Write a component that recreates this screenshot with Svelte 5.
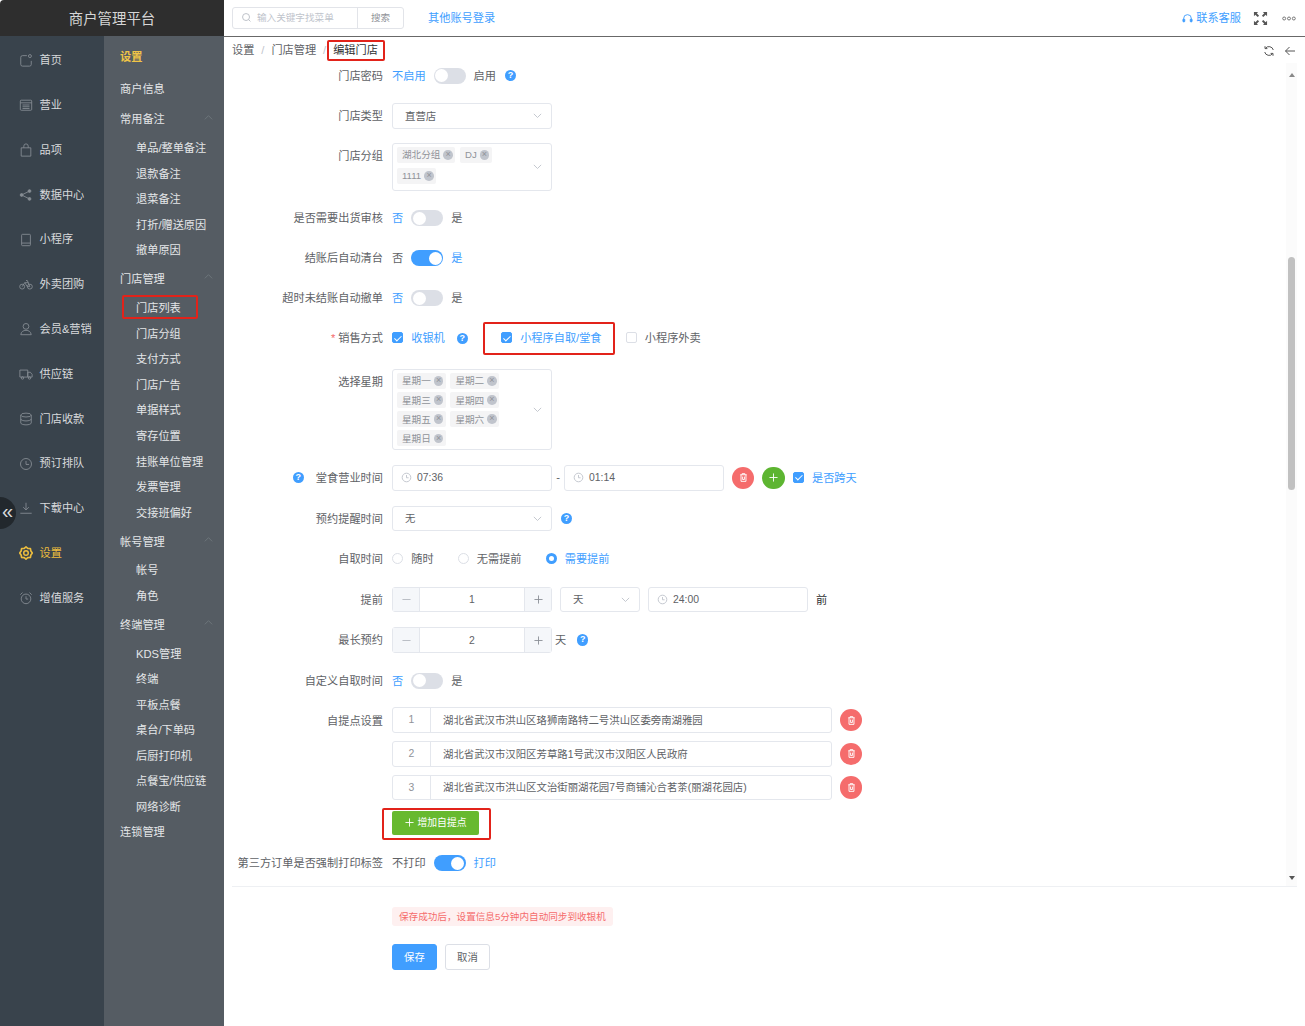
<script>
  const rail = [
    { label: '首页', icon: '<path d="M9 3H4a2 2 0 0 0-2 2v8a2 2 0 0 0 2 2h8a2 2 0 0 0 2-2V9"/><circle cx="12.5" cy="3.5" r="1.7"/>' },
    { label: '营业', icon: '<rect x="1.5" y="2.5" width="13" height="11.5" rx="1"/><path d="M1.5 5.5h13M4 8h8M4 10h8M4 12h8"/>' },
    { label: '品项', icon: '<path d="M2.5 5.5h11V15h-11zM5.5 5.5V3.5a2.5 2.5 0 0 1 5 0v2"/>' },
    { label: '数据中心', icon: '<circle cx="3" cy="8" r="1.6" fill="currentColor"/><circle cx="12" cy="3.5" r="1.6" fill="currentColor"/><circle cx="12" cy="12.5" r="1.6" fill="currentColor"/><path d="M3 8l9-4.500M3 8l9 4.500"/>' },
    { label: '小程序', icon: '<rect x="3" y="1.500" width="10" height="13" rx="1"/><path d="M3 11.500h10"/>' },
    { label: '外卖团购', icon: '<circle cx="3.600" cy="11" r="2.800"/><circle cx="12.400" cy="11" r="2.800"/><path d="M3.600 11L6.500 6.500l3 4.500h2.900L9.500 4H8M6.500 6.500h4"/>' },
    { label: '会员&营销', icon: '<circle cx="8" cy="5" r="3.300"/><path d="M2 14.500c.5-3.500 3-5 6-5s5.500 1.500 6 5z"/>' },
    { label: '供应链', icon: '<path d="M1 3.500h9v8H1zM10 6h3l2 2.500v3h-5z"/><circle cx="4" cy="12.500" r="1.400"/><circle cx="12" cy="12.500" r="1.400"/>' },
    { label: '门店收款', icon: '<ellipse cx="8" cy="3.500" rx="6" ry="2.200"/><path d="M2 3.500v9c0 1.200 2.700 2.200 6 2.200s6-1 6-2.200v-9M2 8c0 1.200 2.700 2.200 6 2.200s6-1 6-2.200"/>' },
    { label: '预订排队', icon: '<circle cx="8" cy="8" r="6.300"/><path d="M8 4.500V8.500h3.500"/>' },
    { label: '下载中心', icon: '<path d="M8 2v8M4.800 7L8 10.200 11.200 7M1.500 14h13"/>' },
    { label: '设置', active: true, icon: '<path stroke-width="1.900" stroke-linejoin="round" d="M8 1l2 1.700 3 .2.600 2.900L15.200 8l-1.600 2.200-.6 2.900-3 .2L8 15l-2-1.700-3-.2-.6-2.900L.8 8l1.600-2.200.6-2.900 3-.2z"/><circle stroke-width="1.700" cx="8" cy="8" r="2.600"/>' },
    { label: '增值服务', icon: '<circle cx="8" cy="9" r="5.500"/><path d="M8 6v3.200h2.500M1.500 4.200L4 1.800M14.500 4.200L12 1.800"/>' }
  ];

  const menu = [
    { title: '常用备注', items: ['单品/整单备注', '退款备注', '退菜备注', '打折/赠送原因', '撤单原因'] },
    { title: '门店管理', items: ['门店列表', '门店分组', '支付方式', '门店广告', '单据样式', '寄存位置', '挂账单位管理', '发票管理', '交接班偏好'] },
    { title: '帐号管理', items: ['帐号', '角色'] },
    { title: '终端管理', items: ['KDS管理', '终端', '平板点餐', '桌台/下单码', '后厨打印机', '点餐宝/供应链', '网络诊断'] }
  ];

  const groups = ['湖北分组', 'DJ', '1111'];
  const days = ['星期一', '星期二', '星期三', '星期四', '星期五', '星期六', '星期日'];
  const addresses = [
    '湖北省武汉市洪山区珞狮南路特二号洪山区委旁南湖雅园',
    '湖北省武汉市汉阳区芳草路1号武汉市汉阳区人民政府',
    '湖北省武汉市洪山区文治街丽湖花园7号商铺沁合茗茶(丽湖花园店)'
  ];
  const toggles = [
    { label: '是否需要出货审核', off: '否', on: '是', value: false },
    { label: '结账后自动清台', off: '否', on: '是', value: true },
    { label: '超时未结账自动撤单', off: '否', on: '是', value: false }
  ];
</script>

{#snippet chevron()}
  <svg class="chev" viewBox="0 0 12 12"><path d="M2 4.200l4 4 4-4" /></svg>
{/snippet}
{#snippet help()}
  <span class="help">?</span>
{/snippet}
{#snippet clock()}
  <svg class="clock" viewBox="0 0 12 12"><circle cx="6" cy="6" r="4.700" /><path d="M6 3.300V6.300h2.300" /></svg>
{/snippet}
{#snippet plus()}
  <svg class="plus" viewBox="0 0 10 10"><path d="M5 .5v9M.5 5h9" /></svg>
{/snippet}
{#snippet minus()}
  <svg class="plus" viewBox="0 0 10 10"><path d="M.5 5h9" /></svg>
{/snippet}
{#snippet trash()}
  <span class="round del">
    <svg viewBox="0 0 12 12"><path d="M2.500 3h7M4.500 3V1.800h3V3M3.300 3v7.200h5.400V3M5 5v3.200h2V5" /></svg>
  </span>
{/snippet}
{#snippet toggle(on)}
  <span class="switch" class:on><i></i></span>
{/snippet}
{#snippet tag(text)}
  <span class="tag">{text}<i>×</i></span>
{/snippet}

<div class="app">
  <aside class="side">
    <div class="brand">商户管理平台</div>
    <div class="side-body">
      <nav class="rail">
        {#each rail as r}
          <div class="rail-item" class:active={r.active}>
            <svg viewBox="0 0 16 16">{@html r.icon}</svg>
            <span>{r.label}</span>
          </div>
        {/each}
        <div class="collapse">«</div>
      </nav>
      <nav class="sub">
        <div class="sub-title">设置</div>
        <div class="sub-link">商户信息</div>
        {#each menu as g}
          <div class="sub-head">
            <span>{g.title}</span>
            <svg viewBox="0 0 12 12"><path d="M2 8l4-4 4 4" /></svg>
          </div>
          {#each g.items as item}
            <div class="sub-item">{item}</div>
          {/each}
        {/each}
        <div class="sub-last">连锁管理</div>
      </nav>
    </div>
  </aside>

  <main class="main">
    <header class="top">
      <div class="search">
        <div class="search-input">
          <svg viewBox="0 0 12 12"><circle cx="5.500" cy="5.500" r="3.800" /><path d="M8.300 8.300l2 2" /></svg>
          <span>输入关键字找菜单</span>
        </div>
        <div class="search-btn">搜索</div>
      </div>
      <a class="other">其他账号登录</a>
      <div class="top-right">
        <svg class="headset" viewBox="0 0 12 12"><path d="M1.800 8V6a4.200 4.200 0 0 1 8.400 0v2" /><rect x="1" y="6.500" width="2" height="3.200" rx=".8" fill="currentColor" /><rect x="9" y="6.500" width="2" height="3.200" rx=".8" fill="currentColor" /></svg>
        <a>联系客服</a>
        <svg class="full" viewBox="0 0 16 16"><path d="M1 1h4.500L4 2.500l2.500 2.500-1.500 1.500L2.500 4 1 5.500zM15 1v4.500L13.500 4 11 6.500 9.500 5 12 2.500 10.500 1zM1 15v-4.500L2.500 12 5 9.500 6.500 11 4 13.500 5.500 15zM15 15h-4.500l1.500-1.500L9.500 11 11 9.500l2.500 2.500 1.500-1.500z" /></svg>
        <svg class="dots" viewBox="0 0 16 5"><circle cx="2.500" cy="2.500" r="1.700" /><circle cx="8" cy="2.500" r="1.700" /><circle cx="13.500" cy="2.500" r="1.700" /></svg>
      </div>
    </header>

    <div class="crumb">
      <span>设置</span><em>/</em><span>门店管理</span><em>/</em><strong>编辑门店</strong>
      <div class="crumb-tools">
        <svg viewBox="0 0 12 12"><path d="M10.300 5A4.500 4.500 0 0 0 2.400 3.300M1.700 7a4.500 4.500 0 0 0 7.900 1.700" /><path d="M2 1.200v2.400h2.400M10 10.800V8.400H7.600" /></svg>
        <svg viewBox="0 0 12 12"><path d="M11 6H1.500M5.500 2L1.500 6l4 4" /></svg>
      </div>
    </div>

    <div class="content">
      <form class="form">
        <div class="row">
          <label>门店密码</label>
          <span class="link">不启用</span>{@render toggle(false)}<span class="val">启用</span>{@render help()}
        </div>
        <div class="row">
          <label>门店类型</label>
          <div class="select w160"><span>直营店</span>{@render chevron()}</div>
        </div>
        <div class="row top-aligned">
          <label>门店分组</label>
          <div class="multi group-box">
            <div class="tags group-tags">
              {#each groups as g}{@render tag(g)}{/each}
            </div>
            {@render chevron()}
          </div>
        </div>
        {#each toggles as t}
          <div class="row">
            <label>{t.label}</label>
            <span class:link={!t.value} class:val={t.value}>{t.off}</span>{@render toggle(t.value)}<span class:link={t.value} class:val={!t.value}>{t.on}</span>
          </div>
        {/each}
        <div class="row sale">
          <label><b>*</b> 销售方式</label>
          <span class="check on"></span><span class="link">收银机</span>{@render help()}
          <span class="check on second"></span><span class="link">小程序自取/堂食</span>
          <span class="check third"></span><span class="val">小程序外卖</span>
        </div>
        <div class="row week top-aligned">
          <label>选择星期</label>
          <div class="multi week-box">
            <div class="tags week-tags">
              {#each days as d}{@render tag(d)}{/each}
            </div>
            {@render chevron()}
          </div>
        </div>
        <div class="row wide">
          <label>{@render help()}<span class="label-text">堂食营业时间</span></label>
          <div class="select w160 time">{@render clock()}<span>07:36</span></div>
          <span class="dash">-</span>
          <div class="select w160 time">{@render clock()}<span>01:14</span></div>
          <span class="round-gap">{@render trash()}</span>
          <span class="round add">{@render plus()}</span>
          <span class="check on cross"></span><span class="link">是否跨天</span>
        </div>
        <div class="row wide">
          <label>预约提醒时间</label>
          <div class="select w160"><span>无</span>{@render chevron()}</div>
          <span class="help-gap">{@render help()}</span>
        </div>
        <div class="row wide">
          <label>自取时间</label>
          <span class="radio"></span><span class="val r1">随时</span>
          <span class="radio"></span><span class="val r2">无需提前</span>
          <span class="radio on"></span><span class="link">需要提前</span>
        </div>
        <div class="row wide">
          <label>提前</label>
          <div class="number"><i class="dis">{@render minus()}</i><span>1</span><i>{@render plus()}</i></div>
          <div class="select w80"><span>天</span>{@render chevron()}</div>
          <div class="select w160 time">{@render clock()}<span>24:00</span></div>
          <span class="dark before">前</span>
        </div>
        <div class="row wide">
          <label>最长预约</label>
          <div class="number"><i class="dis">{@render minus()}</i><span>2</span><i>{@render plus()}</i></div>
          <span class="val unit">天</span>
          <span class="help-gap2">{@render help()}</span>
        </div>
        <div class="row wide last-wide">
          <label>自定义自取时间</label>
          <span class="link">否</span>{@render toggle(false)}<span class="val">是</span>
        </div>
        {#each addresses as a, i}
          <div class="row addr">
            <label>{i === 0 ? '自提点设置' : ''}</label>
            <div class="group"><span class="idx">{i + 1}</span><span class="addr-text">{a}</span></div>
            <span class="addr-del">{@render trash()}</span>
          </div>
        {/each}
        <div class="row add-row">
          <label></label>
          <div class="add-btn">{@render plus()}<span>增加自提点</span></div>
        </div>
        <div class="row">
          <label>第三方订单是否强制打印标签</label>
          <span class="val">不打印</span>{@render toggle(true)}<span class="link">打印</span>
        </div>
      </form>
      <div class="scrollbar">
        <i class="arrow up"></i>
        <div class="thumb"></div>
        <i class="arrow down"></i>
      </div>
    </div>

    <footer class="foot">
      <div class="alert">保存成功后，设置信息5分钟内自动同步到收银机</div>
      <div class="btns">
        <div class="btn primary">保存</div>
        <div class="btn">取消</div>
      </div>
    </footer>
  </main>

  <div class="mark m1"></div>
  <div class="mark m2"></div>
  <div class="mark m3"></div>
  <div class="mark m4"></div>
</div>

<style>
  :global(body) { margin: 0; background: #fff; }
  .app {
    position: relative;
    display: flex;
    width: 1305px;
    height: 1026px;
    overflow: hidden;
    font: 11.2px/1.2 "Liberation Sans", "Noto Sans CJK SC", sans-serif;
    color: #606266;
    background: #fff;
  }
  .side { width: 224px; flex: none; display: flex; flex-direction: column; }
  .brand {
    height: 36px;
    background: #2e2e2e;
    color: #d6d6d6;
    font-size: 14.400px;
    line-height: 39px;
    text-align: center;
    border-top-left-radius: 4px;
  }
  .side-body { flex: 1; display: flex; min-height: 0; }
  .rail {
    position: relative;
    width: 104px;
    flex: none;
    background: #39434c;
    padding-top: 2px;
    box-sizing: border-box;
  }
  .rail-item {
    height: 44.800px;
    display: flex;
    align-items: center;
    padding-left: 19px;
    gap: 6.500px;
    color: #d8dadc;
  }
  .rail-item svg {
    width: 14px;
    height: 14px;
    flex: none;
    fill: none;
    stroke: #868d93;
    color: #868d93;
    stroke-width: 1;
  }
  .rail-item span { padding-top: 1px; }
  .rail-item.active, .rail-item.active svg { color: #ecbd3e; stroke: #ecbd3e; }
  .collapse {
    position: absolute;
    left: 0;
    top: 460.500px;
    width: 16px;
    height: 32px;
    background: #22282d;
    border-radius: 0 16px 16px 0;
    color: #d8dadc;
    font-size: 20px;
    line-height: 28px;
    padding-left: 2px;
    box-sizing: border-box;
  }
  .sub {
    flex: 1;
    background: #555c63;
    color: #e4e6e8;
    padding: 1px 10px 0 16px;
  }
  .sub-title { color: #f0c447; font-weight: 700; height: 40px; line-height: 41px; }
  .sub-link { height: 26px; line-height: 24px; margin-bottom: 1px; }
  .sub-head {
    height: 32px;
    display: flex;
    align-items: center;
    justify-content: space-between;
  }
  .sub-head svg { width: 11px; height: 11px; fill: none; stroke: #6f767c; stroke-width: 1; margin-bottom: 6px; }
  .sub-item { height: 25.600px; line-height: 24.600px; padding-left: 16px; }
  .sub-last { height: 25px; line-height: 25px; margin-top: -1px; }

  .main { flex: 1; min-width: 0; display: flex; flex-direction: column; padding: 0 8px; }
  .top {
    height: 36px;
    margin: 0 -8px;
    padding: 0 8px;
    border-bottom: 1px solid #686868;
    display: flex;
    align-items: center;
  }
  .search {
    display: flex;
    width: 172px;
    height: 22px;
    margin-top: -1px;
    border: 1px solid #e2e4e9;
    border-radius: 3px;
    box-sizing: border-box;
    font-size: 9.600px;
  }
  .search-input { flex: 1; display: flex; align-items: center; padding-left: 8px; gap: 5px; color: #c0c4cc; }
  .search-input svg { width: 11px; height: 11px; fill: none; stroke: #b8bcc4; stroke-width: 1; }
  .search-btn { width: 46px; border-left: 1px solid #e2e4e9; text-align: center; line-height: 19px; color: #909399; box-sizing: border-box; }
  .other, .top-right a { color: #409eff; padding-top: 2px; }
  .other { margin-left: 24px; }
  .top-right { margin-left: auto; display: flex; align-items: center; }
  .headset { width: 11px; height: 11px; fill: none; stroke: currentColor; color: #409eff; stroke-width: 1; margin-right: 3px; }
  .full { width: 15px; height: 15px; margin-left: 12px; fill: #555; }
  .dots { width: 14px; height: 5px; margin-left: 14px; margin-right: 1px; fill: none; stroke: #666; stroke-width: 1; }

  .crumb { height: 26px; display: flex; align-items: center; flex: none; color: #606266; }
  .crumb span, .crumb strong { padding-top: 2px; }
  .crumb em { font-style: normal; color: #c0c4cc; width: 17px; text-align: center; padding-top: 2px; }
  .crumb strong { font-weight: 400; color: #303133; }
  .crumb-tools { margin-left: auto; display: flex; align-items: center; gap: 9px; margin-right: 1px; padding-top: 2px; }
  .crumb-tools svg { width: 12px; height: 12px; fill: none; stroke: #555; stroke-width: 1; }

  .content { height: 823px; flex: none; display: flex; overflow: hidden; border-bottom: 1px solid #eef0f3; }
  .form { flex: 1; min-width: 0; }
  .row { display: flex; align-items: center; min-height: 25.600px; margin-bottom: 14.400px; white-space: nowrap; }
  .row > label {
    width: 151px;
    flex: none;
    margin-right: 9px;
    text-align: right;
    color: #606266;
    display: flex;
    justify-content: flex-end;
    align-items: center;
    padding-top: 2px;
    box-sizing: border-box;
  }
  .top-aligned { align-items: flex-start; }
  .top-aligned > label { height: 25.600px; }
  .row > label b { color: #f56c6c; font-weight: 400; margin-right: 3px; }
  .label-text { margin-left: 12px; }
  .link, .val, .dark, .select > span, .number > span, .addr-text { padding-top: 2px; }
  .link { color: #409eff; }
  .val { color: #606266; }
  .dark { color: #303133; }

  .switch {
    width: 32px;
    height: 16px;
    border-radius: 8px;
    background: #dcdfe6;
    margin: 0 8px;
    display: flex;
    align-items: center;
    padding: 1.500px;
    box-sizing: border-box;
    flex: none;
  }
  .switch i { width: 13px; height: 13px; border-radius: 50%; background: #fff; }
  .switch.on { background: #409eff; justify-content: flex-end; }

  .help {
    width: 11.200px;
    height: 11.200px;
    border-radius: 50%;
    background: #409eff;
    color: #fff;
    font-size: 9px;
    font-weight: 700;
    line-height: 11.200px;
    text-align: center;
    display: inline-block;
    flex: none;
  }
  .row > .help { margin-left: 9px; }
  .sale > .help { margin-left: 12px; }
  .row > label .help { margin: 0 0 2px; }
  .help-gap { margin-left: 9px; display: flex; }
  .help-gap2 { margin-left: 11px; display: flex; }

  .select {
    height: 25.600px;
    border: 1px solid #e4e7ed;
    border-radius: 3px;
    box-sizing: border-box;
    display: flex;
    align-items: center;
    padding: 0 8px 0 12px;
    justify-content: space-between;
    flex: none;
    font-size: 10.400px;
  }
  .w160 { width: 160px; }
  .w80 { width: 80px; margin-left: 8px; }
  .chev { width: 11px; height: 11px; fill: none; stroke: #c0c4cc; stroke-width: 1; flex: none; }
  .time { justify-content: flex-start; padding-left: 8px; gap: 5px; }
  .clock { width: 11px; height: 11px; fill: none; stroke: #c0c4cc; stroke-width: 1; flex: none; }
  .row .select + .time { margin-left: 8px; }
  .dash { width: 12px; text-align: center; }

  .multi {
    width: 160px;
    border: 1px solid #e4e7ed;
    border-radius: 3px;
    box-sizing: border-box;
    display: flex;
    align-items: center;
    justify-content: space-between;
    padding: 0 8px 0 4px;
  }
  .group-box { height: 48px; }
  .week-box { height: 81px; }
  .tags { display: flex; flex-wrap: wrap; align-self: flex-start; padding-top: 3px; column-gap: 4.500px; }
  .group-tags { width: 120px; row-gap: 5px; }
  .week-tags { width: 120px; row-gap: 3.200px; }
  .tag {
    height: 16px;
    background: #f4f4f5;
    border-radius: 2px;
    color: #909399;
    font-size: 9.600px;
    line-height: 15px;
    padding: 0 2.500px 0 5px;
    display: inline-flex;
    align-items: center;
    gap: 3px;
    box-sizing: border-box;
  }
  .tag i {
    width: 9.600px;
    height: 9.600px;
    border-radius: 50%;
    background: #c0c4cc;
    color: #909399;
    font-size: 9px;
    font-style: normal;
    line-height: 9.600px;
    text-align: center;
  }

  .check {
    width: 11.200px;
    height: 11.200px;
    border: 1px solid #dcdfe6;
    border-radius: 2px;
    box-sizing: border-box;
    margin-right: 8px;
    margin-bottom: 1px;
    position: relative;
    flex: none;
  }
  .check.on { background: #409eff; border-color: #409eff; }
  .check.on::after {
    content: "";
    position: absolute;
    left: 3px;
    top: 0.500px;
    width: 2.500px;
    height: 6px;
    border: solid #fff;
    border-width: 0 1px 1px 0;
    transform: rotate(45deg);
  }
  .second { margin-left: 33px; }
  .third { margin-left: 24px; }
  .cross { margin-left: 8px; }

  .round {
    width: 22.400px;
    height: 22.400px;
    border-radius: 50%;
    display: flex;
    align-items: center;
    justify-content: center;
    color: #fff;
    flex: none;
  }
  .del { background: #f56c6c; }
  .del svg { width: 11px; height: 11px; fill: none; stroke: #fff; stroke-width: 1; }
  .add { background: #5db531; margin-left: 8px; }
  .round-gap { margin-left: 8px; }
  .plus { width: 9px; height: 9px; fill: none; stroke: currentColor; stroke-width: 1; flex: none; }

  .radio {
    width: 11.200px;
    height: 11.200px;
    border: 1px solid #dcdfe6;
    border-radius: 50%;
    box-sizing: border-box;
    margin-right: 8px;
    flex: none;
  }
  .radio.on { border: 3.500px solid #409eff; background: #fff; }
  .r1 { margin-right: 24px; }
  .r2 { margin-right: 24px; }

  .number {
    width: 160px;
    height: 25.600px;
    border: 1px solid #e4e7ed;
    border-radius: 3px;
    box-sizing: border-box;
    display: flex;
    align-items: center;
    flex: none;
    font-size: 10.400px;
  }
  .number span { flex: 1; text-align: center; }
  .number i {
    width: 26px;
    height: 100%;
    background: #f5f7fa;
    display: flex;
    align-items: center;
    justify-content: center;
    color: #8b8f96;
    flex: none;
  }
  .number i:first-child { border-right: 1px solid #e4e7ed; }
  .number i:last-child { border-left: 1px solid #e4e7ed; }
  .number i.dis { color: #b4b8c0; }
  .before { margin-left: 8px; }
  .unit { margin-left: 3px; }

  .wide { margin-bottom: 15px; }
  .last-wide { margin-bottom: 14px; }
  .sale { margin-bottom: 18px; }
  .week { margin-bottom: 15px; }
  .addr { margin-bottom: 8px; }
  .group {
    width: 440px;
    height: 25.600px;
    border: 1px solid #e4e7ed;
    border-radius: 3px;
    box-sizing: border-box;
    display: flex;
    align-items: center;
    flex: none;
    font-size: 10.400px;
  }
  .idx { width: 38px; height: 100%; padding-top: 1px; text-align: center; border-right: 1px solid #e4e7ed; line-height: 22px; color: #909399; box-sizing: border-box; flex: none; }
  .addr-text { padding-left: 12px; }
  .addr-del { margin-left: 8px; }
  .add-row { margin-top: 10.500px; margin-bottom: 15.500px; min-height: 24px; }
  .add-btn {
    width: 87px;
    height: 24px;
    background: #67b92f;
    border-radius: 2px;
    color: #fff;
    font-size: 9.800px;
    display: flex;
    align-items: center;
    justify-content: center;
    gap: 4px;
  }
  .add-btn span { padding-top: 1px; }

  .scrollbar { width: 11px; display: flex; flex-direction: column; align-items: center; height: 100%; position: relative; background: #fbfbfb; }
  .arrow { width: 0; height: 0; border: 3.500px solid transparent; }
  .arrow.up { border-bottom: 4px solid #888; margin-top: 7px; }
  .arrow.down { border-top: 4px solid #555; position: absolute; bottom: 3px; }
  .thumb { width: 7px; height: 233px; background: #c1c1c1; border-radius: 4px; margin-top: 180px; }

  .foot { padding-left: 160px; padding-top: 20px; }
  .alert {
    display: inline-block;
    height: 19.200px;
    line-height: 19.200px;
    padding: 0 7px;
    background: #fef0f0;
    border-radius: 3px;
    color: #f56c6c;
    font-size: 9.600px;
    vertical-align: top;
  }
  .btns { display: flex; gap: 8px; margin-top: 18px; }
  .btn {
    width: 45px;
    height: 25.600px;
    line-height: 25px;
    text-align: center;
    border: 1px solid #dcdfe6;
    border-radius: 3px;
    box-sizing: border-box;
    font-size: 10.400px;
    color: #606266;
  }
  .btn.primary { background: #409eff; border-color: #409eff; color: #fff; }

  .mark { position: absolute; border: 2px solid #e2231a; border-radius: 2px; box-sizing: border-box; pointer-events: none; }
  .m1 { left: 327px; top: 40px; width: 58px; height: 21px; }
  .m2 { left: 122px; top: 295px; width: 76px; height: 24px; }
  .m3 { left: 483px; top: 322px; width: 132px; height: 33px; }
  .m4 { left: 382px; top: 808px; width: 109px; height: 32px; }
</style>
